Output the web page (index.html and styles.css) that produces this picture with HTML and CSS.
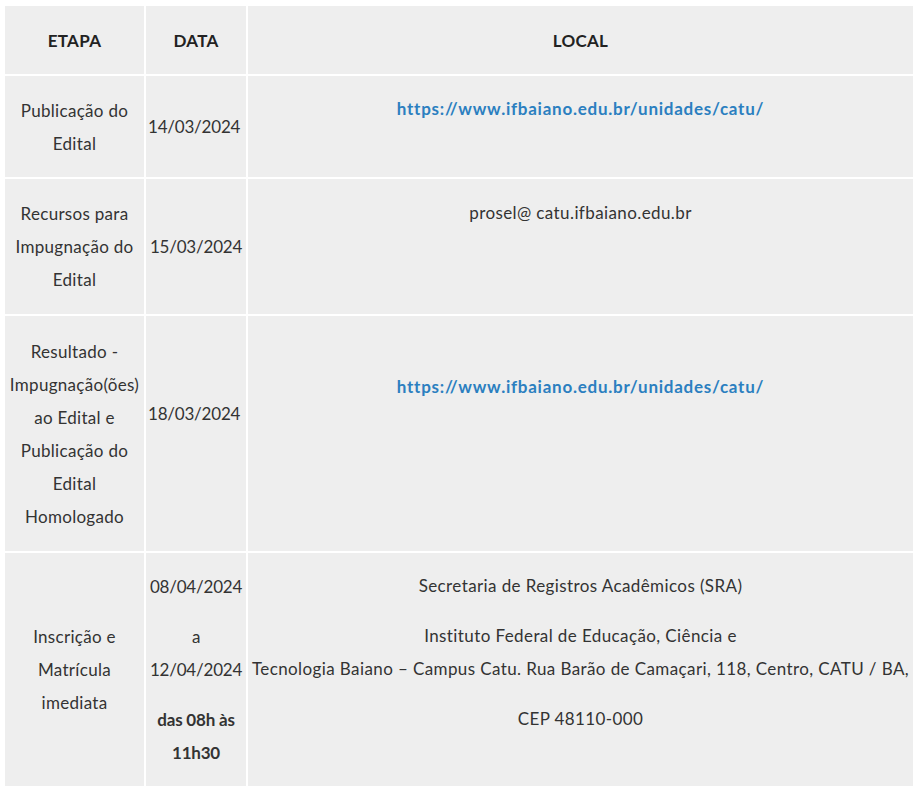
FILE: index.html
```html
<!DOCTYPE html>
<html lang="pt-BR">
<head>
<meta charset="utf-8">
<title>Cronograma</title>
<link rel="stylesheet" href="styles.css">
</head>
<body>
<table class="cronograma">
  <colgroup>
    <col class="c-etapa">
    <col class="c-data">
    <col class="c-local">
  </colgroup>
  <thead>
    <tr class="r-head">
      <th>ETAPA</th>
      <th>DATA</th>
      <th>LOCAL</th>
    </tr>
  </thead>
  <tbody>
    <tr class="r1">
      <td class="etapa">Publicação do<br>Edital</td>
      <td class="date date-left">14/03/2024</td>
      <td class="local"><a class="link" href="#">https://www.ifbaiano.edu.br/unidades/catu/</a></td>
    </tr>
    <tr class="r2">
      <td class="etapa">Recursos para<br>Impugnação do<br>Edital</td>
      <td class="date">15/03/2024</td>
      <td class="local local-r2">prosel@ catu.ifbaiano.edu.br</td>
    </tr>
    <tr class="r3">
      <td class="etapa">Resultado -<br>Impugnação(ões)<br>ao Edital e<br>Publicação do<br>Edital<br>Homologado</td>
      <td class="date date-left date-r3">18/03/2024</td>
      <td class="local local-r3"><a class="link" href="#">https://www.ifbaiano.edu.br/unidades/catu/</a></td>
    </tr>
    <tr class="r4">
      <td class="etapa">Inscrição e<br>Matrícula<br>imediata</td>
      <td class="date">
        <p class="para">08/04/2024</p>
        <p class="para">a<br>12/04/2024</p>
        <p class="para strong">das 08h às<br>11h30</p>
      </td>
      <td class="local">
        <p class="para">Secretaria de Registros Acadêmicos (SRA)</p>
        <p class="para">Instituto Federal de Educação, Ciência e<br>Tecnologia Baiano – Campus Catu. Rua Barão de Camaçari, 118, Centro, CATU / BA,</p>
        <p class="para">CEP 48110-000</p>
      </td>
    </tr>
  </tbody>
</table>
</body>
</html>
```

FILE: styles.css
```css
html, body {
  margin: 0;
  padding: 0;
  background: #ffffff;
}

body {
  padding: 4px 0 0 3px;
  font-family: Lato, "Open Sans", sans-serif;
  font-size: 17px;
  color: #333333;
}

.cronograma {
  border-collapse: separate;
  border-spacing: 2px;
  width: 912px;
  table-layout: fixed;
}

.c-etapa { width: 139px; }
.c-data { width: 100px; }
.c-local { width: 665px; }

.cronograma th,
.cronograma td {
  background: #eeeeee;
  padding: 0;
  line-height: 33px;
  text-align: center;
  vertical-align: middle;
  overflow: visible;
  white-space: nowrap;
}

.cronograma th {
  font-weight: 700;
  color: #222222;
  letter-spacing: 0.3px;
}

.r-head { height: 68px; }
.r1 { height: 101px; }
.r2 { height: 135px; }
.r3 { height: 235px; }
.r4 { height: 233px; }

.cronograma td.etapa {
  letter-spacing: 0.3px;
}

.cronograma td.date {
  letter-spacing: -0.2px;
}

.cronograma td.date-left {
  text-align: left;
  padding-left: 2px;
}

.cronograma td.date-r3 {
  padding-bottom: 40px;
}

.cronograma td.local {
  vertical-align: top;
  padding-top: 16px;
  letter-spacing: 0.4px;
}

.cronograma td.local-r2 {
  padding-top: 17px;
}

.cronograma td.local-r3 {
  padding-top: 54px;
}

.link {
  color: #2b7fc0;
  font-weight: 700;
  text-decoration: none;
  letter-spacing: 0.75px;
}

.para {
  margin: 0 0 17px 0;
}
.para:last-child {
  margin-bottom: 0;
}

.strong {
  font-weight: 700;
}
```
